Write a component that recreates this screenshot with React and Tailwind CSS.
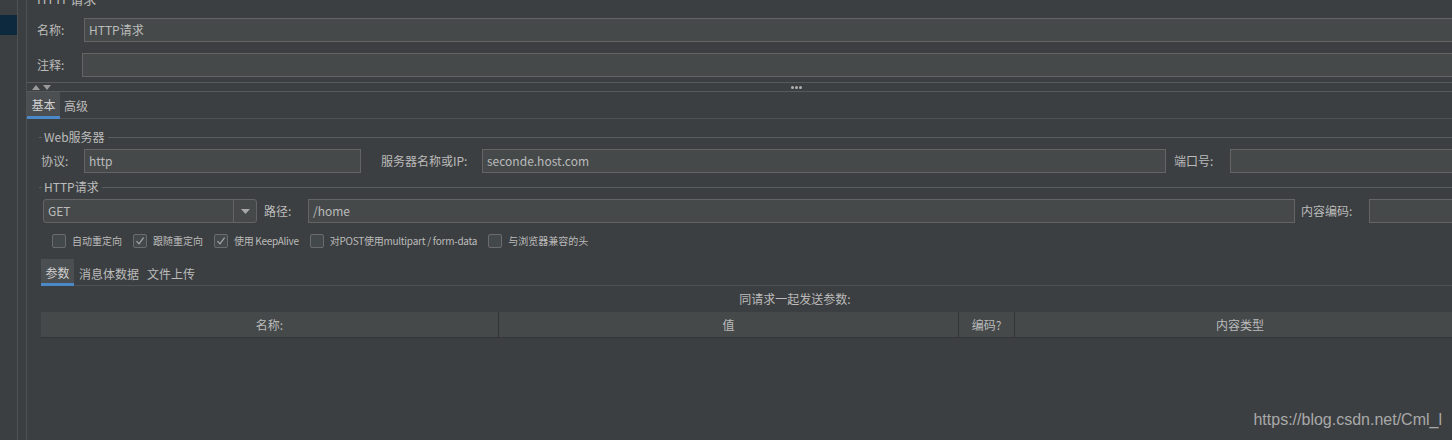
import React from "react";

const Input = ({ value, className = "" }) => (
  <div
    className={
      "h-[24px] border border-[#646464] bg-[#45494a] flex items-center px-[4px] text-[12px] text-[#bbbbbb] " +
      className
    }
  >
    {value}
  </div>
);

const Check = ({ checked, label, labelClass = "" }) => (
  <div className="flex items-center">
    <div className="w-[14px] h-[14px] border border-[#6b6b6b] rounded-[2px] bg-[#43494a] flex items-center justify-center">
      {checked && (
        <svg width="10" height="10" viewBox="0 0 10 10">
          <path d="M1.5 5.2 L4 7.8 L8.6 1.6" fill="none" stroke="#a8a8a8" strokeWidth="1.2" />
        </svg>
      )}
    </div>
    <span className={"ml-[6px] text-[10px] text-[#bbbbbb] leading-[14px] whitespace-nowrap " + labelClass}>{label}</span>
  </div>
);

const FieldTitle = ({ title, className = "" }) => (
  <div className={"flex items-center h-[14px] " + className}>
    <div className="ml-[12px] w-[3px] h-px bg-[#5a5d5f]" />
    <span className="ml-[2px] text-[12px] text-[#bbbbbb] leading-[14px]">{title}</span>
    <div className="ml-[3px] flex-1 h-px bg-[#5a5d5f]" />
  </div>
);

export default function App() {
  return (
    <div className="w-[1452px] h-[440px] overflow-hidden bg-[#3c3f41] flex relative font-['Noto_Sans_CJK_SC',sans-serif] text-[#bbbbbb]">
      {/* sidebar */}
      <div className="w-[17px] shrink-0">
        <div className="mt-[15px] h-[20px] bg-[#0d293e]" />
      </div>
      <div className="w-px shrink-0 bg-[#4f5254]" />
      <div className="w-[8px] shrink-0" />
      <div className="w-px shrink-0 bg-[#4f5254]" />

      {/* main */}
      <div className="w-[1452px] shrink-0 flex flex-col">
        <div className="h-[18px] overflow-hidden">
          <div className="-mt-[8px] pl-[10px] text-[13px] leading-[14px]">HTTP请求</div>
        </div>

        <div className="flex items-center h-[24px]">
          <div className="w-[57px] pl-[10px] text-[12px]">名称:</div>
          <Input value="HTTP请求" className="flex-1" />
        </div>
        <div className="flex items-center h-[24px] mt-[11px]">
          <div className="w-[55px] pl-[10px] text-[12px]">注释:</div>
          <Input value="" className="flex-1" />
        </div>

        <div className="mt-[5px] h-px bg-[#575a5c]" />
        <div className="h-[8px] flex items-center">
          <div className="ml-[5px] flex items-center gap-[3px]">
            <svg width="8" height="5" viewBox="0 0 8 5">
              <path d="M0 5 L4 0 L8 5 Z" fill="#9a9a9a" />
            </svg>
            <svg width="8" height="5" viewBox="0 0 8 5">
              <path d="M0 0 L8 0 L4 5 Z" fill="#9a9a9a" />
            </svg>
          </div>
          <div className="ml-[740px] flex gap-[1px]">
            <div className="w-[3px] h-[3px] rounded-full bg-[#b0b0b0]" />
            <div className="w-[3px] h-[3px] rounded-full bg-[#b0b0b0]" />
            <div className="w-[3px] h-[3px] rounded-full bg-[#b0b0b0]" />
          </div>
        </div>
        <div className="h-px bg-[#575a5c]" />

        {/* tabs */}
        <div className="h-[27px] border-b border-[#4f5254] flex">
          <div className="w-[33px] h-[27px] -mb-px pt-[2px] bg-[#4b4f51] border-b-[3px] border-[#4a88c7] flex items-center justify-center text-[12px] text-[#d0d0d0]">
            基本
          </div>
          <div className="ml-[4px] h-[24px] pt-[4px] flex items-center text-[12px]">高级</div>
        </div>

        <FieldTitle title="Web服务器" className="mt-[11px] mr-[14px]" />
        <div className="flex items-center h-[24px] mt-[5px]">
          <div className="w-[57px] pl-[14px] text-[12px]">协议:</div>
          <Input value="http" className="w-[277px]" />
          <div className="w-[121px] pl-[20px] text-[12px]">服务器名称或IP:</div>
          <Input value="seconde.host.com" className="w-[684px]" />
          <div className="w-[64px] pl-[8px] text-[12px]">端口号:</div>
          <Input value="" className="flex-1" />
        </div>

        <FieldTitle title="HTTP请求" className="mt-[7px] mr-[14px]" />
        <div className="flex items-center h-[24px] mt-[5px]">
          <div className="ml-[16px] w-[214px] h-[24px] border border-[#646464] rounded-[3px] bg-[#45494a] flex">
            <div className="flex-1 flex items-center px-[4px] text-[12px]">GET</div>
            <div className="w-[23px] border-l border-[#646464] flex items-center justify-center">
              <svg width="9" height="5" viewBox="0 0 9 5">
                <path d="M0 0 L9 0 L4.5 5 Z" fill="#a8a8a8" />
              </svg>
            </div>
          </div>
          <div className="w-[51px] pl-[7px] text-[12px]">路径:</div>
          <Input value="/home" className="w-[987px]" />
          <div className="w-[74px] pl-[6px] text-[12px]">内容编码:</div>
          <Input value="" className="flex-1" />
        </div>

        <div className="flex items-center h-[14px] mt-[11px] ml-[25px] gap-[11px]">
          <Check label="自动重定向" />
          <Check checked label="跟随重定向" />
          <Check checked label="使用 KeepAlive" labelClass="tracking-[-0.3px]" />
          <Check label="对POST使用multipart / form-data" labelClass="tracking-[-0.25px]" />
          <Check label="与浏览器兼容的头" />
        </div>

        {/* params tabs */}
        <div className="mt-[11px] ml-[14px] h-[27px] border-b border-[#4f5254] flex">
          <div className="w-[33px] h-[27px] -mb-px pt-[3px] bg-[#4b4f51] border-b-[3px] border-[#4a88c7] flex items-center justify-center text-[12px] text-[#d0d0d0]">
            参数
          </div>
          <div className="ml-[5px] h-[24px] pt-[5px] flex items-center text-[12px]">消息体数据</div>
          <div className="ml-[8px] h-[24px] pt-[5px] flex items-center text-[12px]">文件上传</div>
        </div>

        <div className="ml-[14px] mr-[14px] h-[26px] pl-[84px] flex items-center justify-center text-[12px]">
          同请求一起发送参数:
        </div>

        <div className="ml-[14px] mr-[14px] h-[26px] bg-[#45494a] border-b border-[#323435] flex text-[12px]">
          <div className="w-[458px] border-r border-[#323435] flex items-center justify-center">名称:</div>
          <div className="w-[460px] border-r border-[#323435] flex items-center justify-center">值</div>
          <div className="w-[56px] border-r border-[#323435] flex items-center justify-center">编码?</div>
          <div className="flex-1 flex items-center justify-center">内容类型</div>
        </div>
      </div>

      <div className="absolute right-[10px] bottom-[8px] text-[16px] text-[#a9a9a9] font-['Liberation_Sans',sans-serif]">
        https://blog.csdn.net/Cml_l
      </div>
    </div>
  );
}
